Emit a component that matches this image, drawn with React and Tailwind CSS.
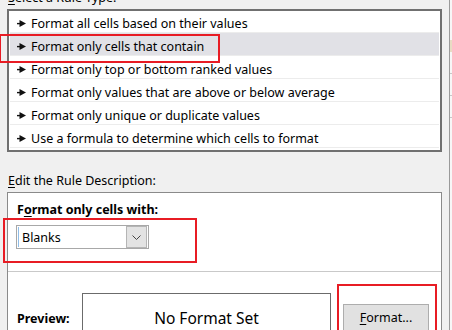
import React from 'react'

const rules = [
  'Format all cells based on their values',
  'Format only cells that contain',
  'Format only top or bottom ranked values',
  'Format only values that are above or below average',
  'Format only unique or duplicate values',
  'Use a formula to determine which cells to format',
]

function Pointer() {
  return (
    <svg width="9" height="7" viewBox="0 0 9 7" className="shrink-0">
      <rect x="0" y="2.9" width="4" height="1.4" fill="#111" />
      <polygon points="2.5,0 9,3.5 2.5,7" fill="#111" />
    </svg>
  )
}

function Chevron() {
  return (
    <svg width="9" height="5" viewBox="0 0 9 5">
      <polyline points="0.5,0.5 4.5,4.5 8.5,0.5" fill="none" stroke="#444" strokeWidth="1" />
    </svg>
  )
}

export default function App() {
  return (
    <div className="relative flex w-[452px] h-[330px] overflow-hidden bg-[#f0f0f0] text-black font-['Noto_Sans',sans-serif] text-[12.5px]">
      <div className="w-[449px] pl-[7px]">
        {/* cut-off title */}
        <div className="h-[9px] overflow-hidden">
          <div className="mt-[-11px] ml-[1px] leading-[17px]">
            <u className="underline-offset-2">S</u>elect a Rule Type:
          </div>
        </div>

        {/* rule list */}
        <div className="w-[435px] h-[143px] border-2 border-[#707070] bg-white">
          {rules.map((r, i) => (
            <div
              key={r}
              className={`mx-[1px] flex items-center gap-[5px] pl-[7px] border-b border-[#ececec] ${i === 0 ? 'h-[22px] pt-[4px]' : 'h-[23px] pt-[5px]'} ${i === 1 ? 'bg-[#e1e1e6]' : ''}`}
            >
              <Pointer />
              <span className="leading-[17px] whitespace-nowrap">{r}</span>
            </div>
          ))}
        </div>

        <div className="h-[40px] pt-[20px] pl-[1px] leading-[17px]">
          <u className="underline-offset-2">E</u>dit the Rule Description:
        </div>

        {/* rule description panel */}
        <div className="w-[435px] h-[160px] border border-[#8a8a8a] bg-white">
          <div className="pt-[8px] pl-[9px] leading-[17px] font-bold">
            F<u className="underline-offset-2">o</u>rmat only cells with:
          </div>
          <div className="mt-[7px] ml-[8px] flex items-center w-[133px] h-[24px] border border-[#a8a8a8] bg-white">
            <div className="ml-[1px] w-[1px] h-[20px] bg-[#8fbde8]" />
            <span className="ml-[3px] flex-1 leading-[17px]">Blanks</span>
            <div className="mr-[1px] flex items-center justify-center w-[21px] h-[22px] bg-[#e3e3e3] border border-[#b5b5b5]">
              <Chevron />
            </div>
          </div>

          <div className="mt-[22px] h-px bg-[#c9c9c9]" />

          <div className="mt-[21px] flex items-start">
            <div className="w-[74px] pl-[9px] pt-[17px] leading-[17px] font-bold">Preview:</div>
            <div className="w-[249px] h-[60px] border border-[#6b6b6b] bg-white flex justify-center pt-[14px]">
              <span className="text-[15.5px] leading-[20px]">No Format Set</span>
            </div>
            <div className="ml-[12px] mt-[11px] w-[86px] h-[28px] flex items-center justify-center bg-[#e1e1e1] border border-[#adadad] pb-[1px]">
              <span className="leading-[17px]">
                <u className="underline-offset-2">F</u>ormat...
              </span>
            </div>
          </div>
        </div>
      </div>

      {/* sliver of the sheet behind */}
      <div className="w-[3px] border-l border-[#9a9a9a] bg-[#f7f7f7] flex flex-col">
        <div className="h-[40px]" />
        <div className="h-[12px] bg-[#e8dcc4]" />
        <div className="h-[22px] border-b border-[#c8c8c8]" />
        <div className="h-[22px] border-b border-[#c8c8c8]" />
        <div className="h-[22px] border-b border-[#c8c8c8]" />
      </div>

      {/* red callouts */}
      <div className="absolute left-[-1px] top-[34px] w-[221px] h-[29px] border-2 border-[#e81c24]" />
      <div className="absolute left-[3px] top-[218px] w-[194px] h-[45px] border-2 border-[#e81c24]" />
      <div className="absolute left-[337px] top-[284px] w-[100px] h-[60px] border-2 border-[#e81c24]" />
    </div>
  )
}
